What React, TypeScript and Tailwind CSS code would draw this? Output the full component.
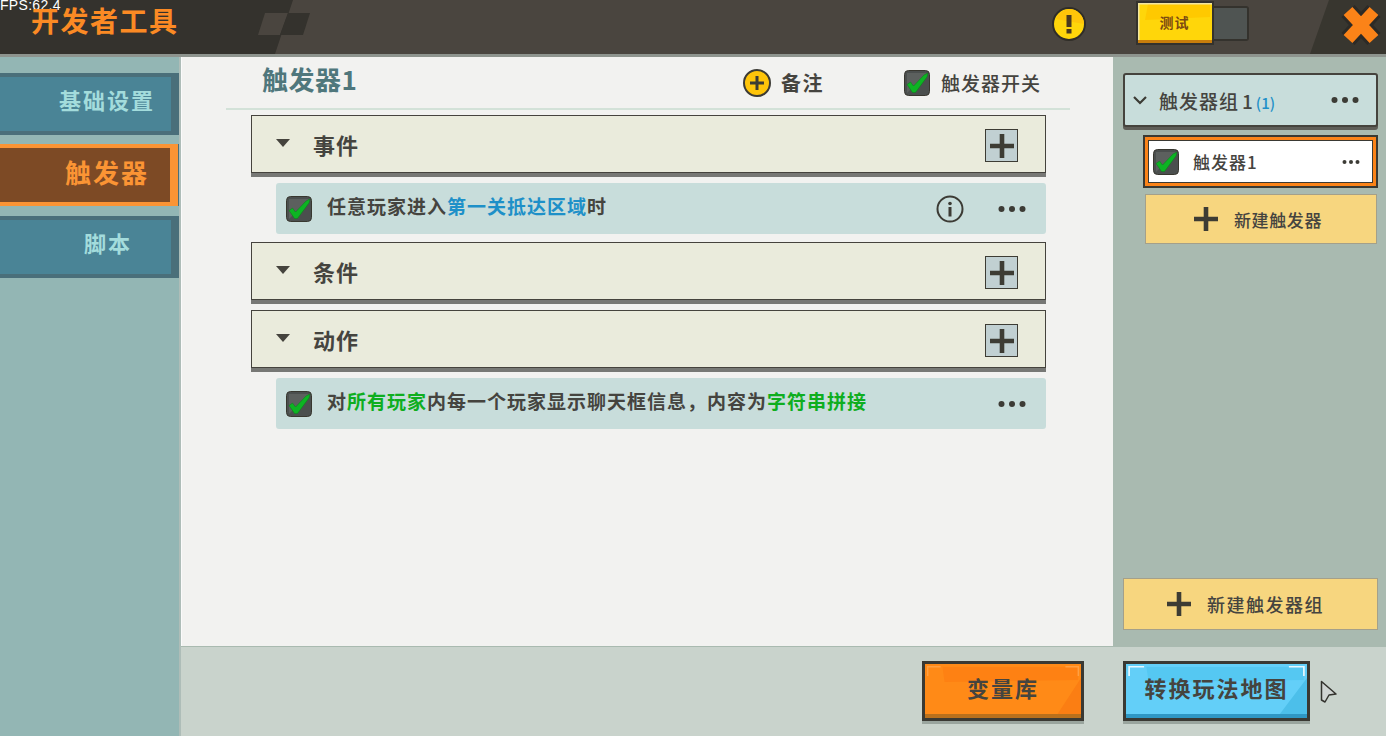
import { ReactNode } from "react";

const FONT = "font-['Noto_Sans_CJK_SC','Noto_Sans',sans-serif]";

function CheckBox() {
    return (
        <svg width="26" height="26" viewBox="0 0 26 26" className="flex-shrink-0">
            <rect x="0.5" y="0.5" width="25" height="25" rx="4" fill="#4b4f4e" stroke="#38372f" />
            <path d="M3 3h20L3 23z" fill="#5c605e" />
            <path
                d="M3 14.500 L6.500 12 L9.500 16 L20 5 L24 3 L23 7 L11.500 22.500 L8.500 22.500 Z"
                fill="#0db423"
                stroke="#0a7f1a"
                strokeWidth="0.5"
            />
        </svg>
    );
}

function Dots({ small = false }: { small?: boolean }) {
    return (
        <svg width={small ? 18 : 28} height="8" viewBox={small ? "0 0 18 8" : "0 0 28 8"}>
            {(small ? [2.5, 9, 15.5] : [3.5, 14, 24.5]).map((cx) => (
                <circle key={cx} cx={cx} cy="4" r={small ? 2 : 3} fill="#3c3b35" />
            ))}
        </svg>
    );
}

function PlusGlyph({ size = 24 }: { size?: number }) {
    return (
        <svg width={size} height={size} viewBox="0 0 24 24" className="flex-shrink-0">
            <path d="M9.700 0h4.600v9.700H24v4.600h-9.700V24H9.700V14.300H0V9.700h9.700z" fill="#3d3c34" />
        </svg>
    );
}

function Section({ title }: { title: string }) {
    return (
        <div className="h-[58px] mb-[4px] flex items-center border border-[#45433d] bg-[#eaebdc] shadow-[0_4px_0_#777875] pl-[23px] pr-[27px]">
            <svg width="16" height="10" viewBox="0 0 16 10" className="mb-[3px]">
                <path d="M1 1h14L8 9z" fill="#45433d" />
            </svg>
            <span className="ml-[22px] text-[22px] leading-none font-bold tracking-[1px] text-[#45443f]">{title}</span>
            <div className="ml-auto w-[33px] h-[33px] mt-[3px] flex items-center justify-center border border-[#3d3c34] bg-[#c1d0d2]">
                <PlusGlyph />
            </div>
        </div>
    );
}

function Row({ children, info = false }: { children: ReactNode; info?: boolean }) {
    return (
        <div className="ml-[25px] h-[51px] flex items-center rounded-[3px] bg-[#c8dddb] pl-[10px] pr-[20px]">
            <CheckBox />
            <span className="ml-[15px] mb-[6px] text-[19px] leading-none font-semibold tracking-[1px] text-[#45443f]">{children}</span>
            <div className="ml-auto flex items-center">
                {info && (
                    <svg width="28" height="28" viewBox="0 0 28 28" className="mr-[34px]">
                        <circle cx="14" cy="14" r="12.5" fill="none" stroke="#3c3b35" strokeWidth="2" />
                        <circle cx="14" cy="8.5" r="1.8" fill="#3c3b35" />
                        <rect x="12.5" y="12" width="3" height="9.5" fill="#3c3b35" />
                    </svg>
                )}
                <Dots />
            </div>
        </div>
    );
}

function SideItem({ label, active = false }: { label: string; active?: boolean }) {
    if (active) {
        return (
            <div className="h-[62px] mb-[1px] mr-[1px] flex items-center justify-end border-y-4 border-r-[8px] border-[#fb9434] bg-[#7d4a25] pr-[21px] pb-[6px] shadow-[1px_0_0_#4a6f7a]">
                <span className="text-[26px] leading-none font-bold tracking-[2px] text-[#fb9434]">{label}</span>
            </div>
        );
    }
    return (
        <div className="h-[62px] border-y-4 border-r-[8px] border-[#4a6f7a] bg-[#4a8496] flex items-center justify-end pb-[11px]">
            <span className={`text-[22px] leading-none font-bold tracking-[2px] text-[#a3dcdc] ${label === "脚本" ? "pr-[39px]" : "pr-[16px]"}`}>
                {label}
            </span>
        </div>
    );
}

function GameButton({ label, width, face, edge, band, tint, glint }: { label: string; width: string; face: string; edge: string; band: string; tint: string; glint: string }) {
    return (
        <div className={`${width} h-[60px] border-[3px] border-[#3a3933] ${face} shadow-[0_3px_0_#9aa59e] flex flex-col`}>
            <div className="relative flex-1 flex items-center justify-center pb-[4px]">
                <svg viewBox="0 0 160 50" preserveAspectRatio="none" className="absolute inset-0 w-full h-full">
                    <path d="M18 3H157V16L20 18z" fill={band} />
                    <path d="M160 14V50H136z" fill={tint} />
                    <path d="M2 12V2H16V3.500H3.500V12zM158 12V2H144V3.500H156.500V12z" fill={glint} />
                </svg>
                <span className="relative text-[22px] leading-none font-bold tracking-[2px] text-[#45443f]">{label}</span>
            </div>
            <div className={`h-[4px] ${edge}`} />
        </div>
    );
}

export default function App() {
    return (
        <div className={`relative w-[1386px] h-[736px] overflow-hidden flex flex-col bg-[#93b6b4] ${FONT}`}>
            {/* Top bar */}
            <div className="relative h-[57px] flex-shrink-0 flex items-center bg-[#4a453f] border-b-[3px] border-[#8e948e]">
                <svg width="1386" height="54" viewBox="0 0 1386 54" className="absolute left-0 top-0">
                    <path d="M0 0H293L275 54H0z" fill="#34322d" />
                    <path d="M1329 0H1386V54H1310z" fill="#38362f" />
                    <path d="M265 13H288L280 35H258z" fill="#4a453f" />
                    <path d="M288 13H310L303 35H280z" fill="#34322d" />
                </svg>
                <span className="absolute left-0 top-[-5px] text-[14px] leading-[20px] tracking-[0.3px] text-white font-['Liberation_Sans',sans-serif]">FPS:62.4</span>
                <span className="relative ml-[31px] mb-[14px] text-[28px] leading-none font-bold tracking-[1.5px] text-[#fb8a24]">开发者工具</span>

                <svg width="34" height="34" viewBox="0 0 34 34" className="relative ml-[873px] mb-[6px]">
                    <circle cx="17" cy="17" r="16" fill="#ffd60a" stroke="#2f2d28" strokeWidth="2" />
                    <path d="M17 2A15 15 0 0 1 32 17L4 12A15 15 0 0 1 17 2z" fill="#ffc50a" />
                    <rect x="14.5" y="8" width="5" height="12" fill="#4a3a1e" />
                    <rect x="14.5" y="22" width="5" height="4.5" fill="#4a3a1e" />
                </svg>

                <div className="relative ml-[50px] mb-[8px] flex items-center">
                    <div className="relative w-[78px] h-[44px] border-2 border-[#34322d] bg-[#ffd60a] flex flex-col">
                        <div className="relative flex-1 flex items-center justify-center">
                            <svg viewBox="0 0 74 37" preserveAspectRatio="none" className="absolute inset-0 w-full h-full">
                                <path d="M10 1H72V14L7 17z" fill="#ffc900" />
                                <path d="M0 0H74V1.500H0zM0 0H1.500V37H0z" fill="#f3e6a0" />
                            </svg>
                            <span className="relative text-[14px] leading-none font-bold tracking-[1px] text-[#7c4a12]">测试</span>
                        </div>
                        <div className="h-[3px] bg-[#c97e0c]" />
                    </div>
                    <div className="w-[35px] h-[35px] rounded-r-[3px] border-2 border-l-0 border-[#34322d] bg-[#4f5452]" />
                </div>

                <svg width="40" height="44" viewBox="0 0 40 44" className="relative ml-[92px] mb-[4px]">
                    <path d="M7 8 L33 36 M33 8 L7 36" fill="none" stroke="#2c2a26" strokeWidth="18" />
                    <path d="M7 8 L33 36 M33 8 L7 36" fill="none" stroke="#fb8318" strokeWidth="12" />
                </svg>
            </div>

            <div className="flex-1 flex min-h-0">
                {/* Sidebar */}
                <div className="w-[181px] flex-shrink-0 border-r-2 border-[#aebdb8] pt-[16px] flex flex-col gap-[9px]">
                    <SideItem label="基础设置" />
                    <SideItem label="触发器" active />
                    <SideItem label="脚本" />
                </div>

                <div className="flex-1 flex flex-col min-w-0">
                    <div className="h-[589px] flex">
                        {/* Trigger editor */}
                        <div className="w-[932px] border-l border-[#fbfbfb] bg-[#f2f2f0]">
                            <div className="ml-[44px] w-[844px] h-[53px] flex items-center border-b-2 border-[#d3e2d8] pl-[36px] pr-[29px]">
                                <span className="mb-[7px] text-[26px] leading-none font-bold tracking-[0.5px] text-[#4f777c]">触发器1</span>
                                <svg width="28" height="28" viewBox="0 0 28 28" className="ml-auto">
                                    <circle cx="14" cy="14" r="13" fill="#ffc50a" stroke="#3c3b35" strokeWidth="2" />
                                    <path d="M12.5 7h3v5.500H21v3h-5.500V21h-3v-5.500H7v-3h5.500z" fill="#3c3b35" />
                                </svg>
                                <span className="ml-[10px] text-[20px] leading-none font-bold tracking-[1.5px] text-[#45443f]">备注</span>
                                <div className="ml-[80px]"><CheckBox /></div>
                                <span className="ml-[11px] text-[19px] leading-none font-medium tracking-[1px] text-[#45443f]">触发器开关</span>
                            </div>

                            <div className="ml-[69px] w-[795px] mt-[5px] flex flex-col">
                                <Section title="事件" />
                                <div className="mt-[6px] mb-[8px]">
                                    <Row info>
                                        任意玩家进入<span className="text-[#1e90c8]">第一关抵达区域</span>时
                                    </Row>
                                </div>
                                <Section title="条件" />
                                <div className="h-[6px]" />
                                <Section title="动作" />
                                <div className="mt-[6px]">
                                    <Row>
                                        对<span className="text-[#0fae1f]">所有玩家</span>内每一个玩家显示聊天框信息，内容为<span className="text-[#0fae1f]">字符串拼接</span>
                                    </Row>
                                </div>
                            </div>
                        </div>

                        {/* Trigger groups */}
                        <div className="flex-1 bg-[#a9bab0] pl-[10px] pr-[8px] pt-[16px] pb-[16px] flex flex-col">
                            <div className="h-[54px] flex items-center rounded-[3px] border-2 border-[#45433d] bg-[#c8dddb] shadow-[0_3px_0_#5f5e58] pl-[7px] pr-[17px]">
                                <svg width="16" height="10" viewBox="0 0 16 10">
                                    <path d="M2 2 L8 8 L14 2" fill="none" stroke="#3c3b35" strokeWidth="2.200" />
                                </svg>
                                <span className="ml-[11px] text-[19px] leading-none font-medium tracking-[1px] text-[#45443f]">
                                    触发器组<span className="ml-[3px] tracking-normal">1</span>
                                    <span className="ml-[3px] text-[15px] text-[#1e90c8] tracking-normal">(1)</span>
                                </span>
                                <div className="ml-auto"><Dots /></div>
                            </div>
                            <div className="ml-[20px] mt-[8px] h-[53px] flex items-center border-2 border-[#3a3933] bg-white shadow-[inset_0_0_0_3px_#fb8318,inset_0_0_0_4px_#3a3933] pl-[8px] pr-[16px]">
                                <CheckBox />
                                <span className="ml-[14px] text-[17px] leading-none font-medium tracking-[1px] text-[#45443f]">触发器1</span>
                                <div className="ml-auto"><Dots small /></div>
                            </div>
                            <div className="ml-[22px] mr-[1px] mt-[6px] h-[50px] flex items-center border border-[#a4a08a] bg-[#f7d67f] pl-[48px]">
                                <PlusGlyph />
                                <span className="ml-[16px] text-[17px] leading-none font-medium tracking-[0.6px] text-[#45443f]">新建触发器</span>
                            </div>
                            <div className="mt-auto h-[52px] flex items-center border border-[#a4a08a] bg-[#f7d67f] pl-[43px]">
                                <PlusGlyph />
                                <span className="ml-[16px] text-[18px] leading-none font-medium tracking-[1.500px] text-[#45443f]">新建触发器组</span>
                            </div>
                        </div>
                    </div>

                    {/* Bottom actions */}
                    <div className="relative flex-1 bg-[#c9d3cc] border-t border-[#a9bab0] flex items-start pt-[14px] pl-[741px] gap-[39px]">
                        <GameButton label="变量库" width="w-[162px]" face="bg-[#ff8a17]" edge="bg-[#b9701c]" band="#fe8113" tint="#fb7e13" glint="#ffa043" />
                        <GameButton label="转换玩法地图" width="w-[187px]" face="bg-[#63cff8]" edge="bg-[#2f97c4]" band="#55c8f2" tint="#4cbfea" glint="#e6f8ff" />
                        <svg width="18" height="24" viewBox="0 0 18 24" className="absolute left-[1139px] top-[33px]">
                            <path d="M1.500 1.500 L16 14 L9 15 L5 22 L1.500 20 Z" fill="#cfd4d2" stroke="#33332e" strokeWidth="1.500" strokeLinejoin="round" />
                        </svg>
                    </div>
                </div>
            </div>
        </div>
    );
}
